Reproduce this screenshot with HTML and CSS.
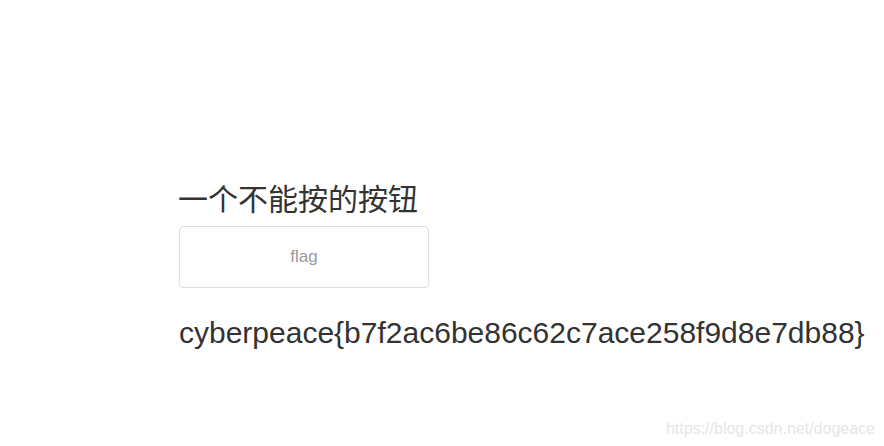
FILE: index.html
```html
<!DOCTYPE html>
<html lang="zh">
<head>
<meta charset="utf-8">
<title>一个不能按的按钮</title>
<link rel="stylesheet" href="styles.css">
</head>
<body>
<div class="container">
  <h2 class="title">一个不能按的按钮</h2>
  <div class="btn">flag</div>
  <p class="flag">cyberpeace{b7f2ac6be86c62c7ace258f9d8e7db88}</p>
</div>
<div class="watermark">https://blog.csdn.net/dogeace</div>
</body>
</html>
```

FILE: styles.css
```css
html, body {
  margin: 0;
  padding: 0;
  background: #ffffff;
}
body {
  font-family: "Liberation Sans", Arial, "Noto Sans CJK SC", sans-serif;
  color: #333333;
  width: 884px;
  height: 446px;
  overflow: hidden;
}
.container {
  padding: 181px 0 0 179px;
  display: flex;
  flex-direction: column;
  align-items: flex-start;
}
.title {
  margin: 0 0 12px -1px;
  font-family: "Noto Sans CJK SC", sans-serif;
  font-weight: 400;
  font-size: 30px;
  line-height: 33px;
  color: #333333;
}
.btn {
  box-sizing: border-box;
  width: 250px;
  height: 62px;
  border: 1px solid #dddddd;
  border-radius: 4px;
  display: flex;
  align-items: center;
  justify-content: center;
  font-size: 17px;
  color: #999999;
  background: #ffffff;
}
.flag {
  margin: 28px 0 0 0;
  font-size: 30px;
  line-height: 33px;
  color: #333333;
  white-space: nowrap;
}
.watermark {
  position: absolute;
  right: 9px;
  bottom: 8px;
  font-size: 16px;
  line-height: 18px;
  color: #e6e6e6;
}
```
